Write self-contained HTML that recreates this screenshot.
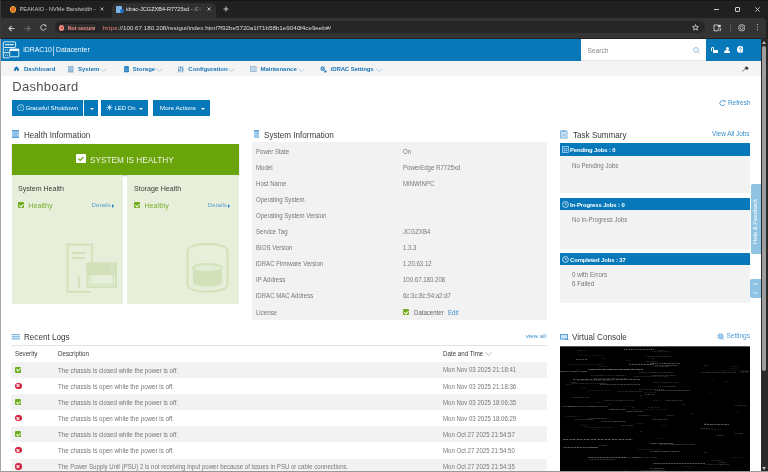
<!DOCTYPE html>
<html><head><meta charset="utf-8">
<style>
*{box-sizing:border-box;margin:0;padding:0}
html,body{width:768px;height:472px;overflow:hidden;background:#fff;font-family:"Liberation Sans",sans-serif}
#root{position:absolute;left:0;top:0;width:768px;height:472px;will-change:transform}
.a{position:absolute;white-space:nowrap;line-height:1}
.r{position:absolute}
#frame{position:absolute;left:0;top:0;width:768px;height:38.5px;background:#202020;border-top:1px solid #161616}
#toolbar{position:absolute;left:0;top:17.6px;width:766px;height:20.9px;background:#343434;border-top-right-radius:4px}
#omni{position:absolute;left:55px;top:20.8px;width:650px;height:12.7px;border-radius:6.5px;background:#262626}
.ct{color:#d8d8d8;font-size:6.2px}
#hdr{position:absolute;left:0;top:38.5px;width:761px;height:22.2px;background:#0779ba}
#nav{position:absolute;left:0;top:60.7px;width:761px;height:15.7px;background:#f4f4f4}
.nv{color:#1a74b6;font-size:6px;font-weight:bold;top:66.1px}
.btn{position:absolute;top:100.2px;height:15.5px;background:#0779ba;color:#fff;font-size:6.2px;line-height:15.2px}
.sec{font-size:9px;color:#3a3a3a;transform-origin:0 0;transform:scaleX(0.9)}
.lbl{font-size:6.6px;color:#777;transform-origin:0 0;transform:scaleX(0.92)}
.val{font-size:6.6px;color:#777;transform-origin:0 0;transform:scaleX(0.92)}
.blue{color:#3b90cd}
.scroll{position:absolute;left:761px;top:38.5px;width:7px;height:434px;background:#2a2a2a}
.logrow{position:absolute;left:11px;width:536px;height:16.1px}
.logrow.g{background:#f2f2f2}
.ok{position:absolute;width:6.3px;height:6.3px;background:#70ad1c;border-radius:1px}
.ok::after{content:"";position:absolute;left:2px;top:0.9px;width:1.5px;height:2.8px;border-right:0.9px solid #fff;border-bottom:0.9px solid #fff;transform:rotate(45deg)}
.err{position:absolute;width:6.5px;height:6.5px;background:#d4213d;border-radius:50%}
.err::before,.err::after{content:"";position:absolute;left:1.3px;top:2.85px;width:3.9px;height:0.8px;background:#fff;transform:rotate(45deg)}
.err::after{transform:rotate(-45deg)}
.jobbar{position:absolute;left:560px;width:189.7px;height:13.3px;background:#0779ba;color:#fff;font-size:5.9px;font-weight:bold;line-height:13.3px;letter-spacing:-0.1px}
</style></head><body><div id="root">
<!-- browser chrome -->
<div id="frame"></div>
<div class="r" style="left:111.5px;top:2.8px;width:104.2px;height:15px;border-radius:5px 5px 0 0;background:#2f2f2f"></div>
<div id="toolbar"></div>
<!-- tab1 -->
<div class="r" style="left:9.5px;top:6px;width:6.5px;height:6.5px;border-radius:50%;background:#e0662a;border:1.2px solid #f2b531"></div>
<div class="a ct" style="left:19.5px;top:7px;font-size:5.6px;color:#c4c4c4">PEAKAIO - NVMe Bandwidth -</div>
<svg class="r" style="left:100.3px;top:7px" width="4" height="4"><path d="M0.5 0.5 L3.5 3.5 M3.5 0.5 L0.5 3.5" stroke="#c8c8c8" stroke-width="0.8"/></svg>
<!-- tab2 -->
<div class="r" style="left:116px;top:5.5px;width:6px;height:7.5px;background:#7ab4e6;border-radius:1px"></div>
<div class="r" style="left:119.5px;top:9px;width:4px;height:4px;background:#1a73c8;border-radius:50%"></div>
<div class="a ct" style="left:126px;top:7px;font-size:5.6px;color:#e6e6e6;width:76px;overflow:hidden;-webkit-mask-image:linear-gradient(90deg,#000 85%,transparent)">idrac-JCGZXB4-R7725xd - iDRAC</div>
<svg class="r" style="left:206.8px;top:6.9px" width="4" height="4"><path d="M0.5 0.5 L3.5 3.5 M3.5 0.5 L0.5 3.5" stroke="#d8d8d8" stroke-width="0.8"/></svg>
<svg class="r" style="left:222.5px;top:6px" width="6" height="6"><path d="M3 0.5 V5.5 M0.5 3 H5.5" stroke="#d8d8d8" stroke-width="0.9"/></svg>
<!-- window controls -->
<div class="r" style="left:714px;top:9px;width:4.5px;height:0.9px;background:#ccc"></div>
<div class="r" style="left:734.5px;top:6.8px;width:5px;height:5px;border:0.9px solid #ccc;border-radius:1px"></div>
<svg class="r" style="left:755px;top:6.8px" width="5" height="5"><path d="M0.3 0.3 L4.7 4.7 M4.7 0.3 L0.3 4.7" stroke="#ccc" stroke-width="0.9"/></svg>
<!-- toolbar -->
<svg class="r" style="left:8px;top:24.5px" width="7" height="7" viewBox="0 0 7 7"><path d="M6.5 3.5 H1 M3.5 1 L1 3.5 L3.5 6" stroke="#c8c8c8" stroke-width="1.1" fill="none"/></svg>
<svg class="r" style="left:24px;top:24.5px" width="7" height="7" viewBox="0 0 7 7"><path d="M0.5 3.5 H6 M3.5 1 L6 3.5 L3.5 6" stroke="#6a6a6a" stroke-width="1.1" fill="none"/></svg>
<svg class="r" style="left:39.5px;top:24.3px" width="7" height="7" viewBox="0 0 7 7"><path d="M5.8 2.3 A2.7 2.7 0 1 0 6 4" stroke="#c8c8c8" stroke-width="1" fill="none"/><path d="M4.2 0.6 L6.3 0.8 L6.2 2.9 Z" fill="#c8c8c8"/></svg>
<div id="omni"></div>
<div class="r" style="left:56.6px;top:22.6px;width:41.4px;height:9.8px;border-radius:5px;background:#2e2e2e;border:0.5px solid #1c1c1c"></div>
<div class="r" style="left:58.8px;top:25px;width:5.5px;height:5.5px;border-radius:50%;background:#f28b82"></div>
<svg class="r" style="left:58.8px;top:25px" width="5.5" height="5.5"><path d="M1.8 1.8 L3.7 3.7 M3.7 1.8 L1.8 3.7" stroke="#5a2a28" stroke-width="0.7"/></svg>
<div class="a" style="left:67.8px;top:25.6px;font-size:5.3px;color:#f28b82;font-weight:bold">Not secure</div>
<div class="a" style="left:102.5px;top:25px;font-size:6.24px;color:#ddd"><span style="color:#f28b82;letter-spacing:0.35px">https</span>://100.67.180.208/restgui/index.html?f92be5720a1f71b58b1e9040f4ce9eeb#/</div>
<svg class="r" style="left:691.8px;top:24.2px" width="7" height="7" viewBox="0 0 7 7"><path d="M3.5 0.6 L4.3 2.6 L6.4 2.7 L4.8 4 L5.3 6.2 L3.5 5 L1.7 6.2 L2.2 4 L0.6 2.7 L2.7 2.6 Z" stroke="#e0e0e0" stroke-width="0.8" fill="none" stroke-linejoin="round"/></svg>
<svg class="r" style="left:713px;top:24px" width="9" height="8" viewBox="0 0 9 8"><path d="M5 1 H1 V6.8 H5" stroke="#d0d0d0" stroke-width="0.9" fill="none"/><rect x="4.8" y="0.8" width="3" height="2.2" fill="#d0d0d0"/><circle cx="6.4" cy="5.2" r="1.3" stroke="#d0d0d0" stroke-width="0.8" fill="none"/><path d="M7.2 6.1 L8 6.9" stroke="#d0d0d0" stroke-width="0.8"/></svg>
<div class="r" style="left:729.5px;top:23.5px;width:0.8px;height:8px;background:#555"></div>
<svg class="r" style="left:737.8px;top:24.2px" width="7.5" height="7.5" viewBox="0 0 7.5 7.5"><circle cx="3.75" cy="3.75" r="3.2" stroke="#d0d0d0" stroke-width="0.8" fill="none"/><circle cx="3.75" cy="3.75" r="1.6" stroke="#d0d0d0" stroke-width="0.7" fill="none"/></svg>
<div class="r" style="left:757.2px;top:24px;width:1.2px;height:1.2px;background:#ccc;box-shadow:0 2.6px 0 #ccc,0 5.2px 0 #ccc"></div>

<!-- iDRAC header -->
<div id="hdr"></div>
<svg class="r" style="left:0;top:38px" width="22" height="22" viewBox="0 0 22 22" fill="none" stroke="#f2f8fc" stroke-width="0.9">
<rect x="3.3" y="3.9" width="12.3" height="5.6" rx="0.8"/>
<path d="M5 6.7 H13.8" stroke-width="1.1"/>
<path d="M3.3 9.5 V19.8 H9.5 M3.3 14.6 H9.5"/>
<path d="M5 12 H5.9 M6.9 12 H7.8 M5 17.2 H5.9 M6.9 17.2 H7.8" stroke-width="1"/>
<rect x="9.7" y="11" width="9.1" height="7.8" rx="0.5" fill="#0779ba"/>
<rect x="9.7" y="11" width="9.1" height="2" fill="#f2f8fc" stroke="none"/>
</svg>
<div class="a" style="left:23.2px;top:47.2px;font-size:6.9px;color:#f4f9fd">iDRAC10</div>
<div class="r" style="left:53.2px;top:46px;width:0.6px;height:10px;background:#a9d0ec"></div>
<div class="a" style="left:56px;top:47.2px;font-size:6.9px;color:#f4f9fd">Datacenter</div>
<div class="r" style="left:580.7px;top:38.5px;width:125.3px;height:22.2px;background:#fff;border-bottom:1px solid #e6e6e6"></div>
<div class="a" style="left:587.5px;top:47.6px;font-size:6.6px;color:#8a8a8a">Search</div>
<svg class="r" style="left:692.8px;top:47px" width="7" height="6.5" viewBox="0 0 7 6.5"><circle cx="3" cy="2.9" r="2.3" stroke="#86b4d8" stroke-width="0.9" fill="none"/><path d="M4.7 4.6 L6.5 6.2" stroke="#86b4d8" stroke-width="0.9"/></svg>
<!-- lock / user / help -->
<div class="r" style="left:713px;top:49.5px;width:4.8px;height:3.5px;background:#fff;border-radius:0.5px"></div>
<div class="r" style="left:710.8px;top:46.5px;width:3.6px;height:4px;border:1px solid #fff;border-bottom:none;border-radius:2px 2px 0 0"></div>
<div class="r" style="left:725.5px;top:46.5px;width:3px;height:3px;background:#fff;border-radius:50%"></div>
<div class="r" style="left:724px;top:50px;width:6px;height:3px;background:#fff;border-radius:3px 3px 0 0"></div>
<svg class="r" style="left:736.6px;top:46.4px" width="6.8" height="6.8" viewBox="0 0 6.8 6.8"><circle cx="3.4" cy="3.4" r="3.4" fill="#fff"/><path d="M2.3 2.6 C2.3 1.4 4.5 1.4 4.5 2.6 C4.5 3.4 3.4 3.4 3.4 4.3" stroke="#0779ba" stroke-width="0.8" fill="none"/><circle cx="3.4" cy="5.3" r="0.45" fill="#0779ba"/></svg>

<!-- nav -->
<div id="nav"></div>
<svg class="r" style="left:14.3px;top:66.4px" width="5" height="5.5" viewBox="0 0 6 6.5"><path d="M3 0.3 L5.8 2.8 V5.8 H3.8 V4 H2.2 V5.8 H0.2 V2.8 Z" fill="#1571b3"/></svg>
<div class="a nv" style="left:24px">Dashboard</div>
<svg class="r" style="left:68.3px;top:66.3px" width="5.5" height="6.5" viewBox="0 0 5.5 6.5"><rect x="0" y="0" width="5.5" height="6.5" fill="#8fb3d3"/><path d="M0.8 1.3 H4.7 M0.8 2.6 H4.7 M0.8 3.9 H4.7" stroke="#c9dcec" stroke-width="0.5"/></svg>
<div class="a nv" style="left:78px">System</div>
<svg class="r" style="left:99.8px;top:67.6px" width="7" height="4.5"><path d="M0.4 0.6 L3.5 3.6 L6.6 0.6" stroke="#a3c3dd" stroke-width="0.8" fill="none"/></svg>
<svg class="r" style="left:123.6px;top:66.2px" width="5" height="6.5" viewBox="0 0 5 6.5"><path d="M0 1 C0 -0.2 5 -0.2 5 1 V5.5 C5 6.7 0 6.7 0 5.5 Z" fill="#2a84c8"/><path d="M0 2.4 C1.5 3.1 3.5 3.1 5 2.4 M0 4 C1.5 4.7 3.5 4.7 5 4" stroke="#a9cdea" stroke-width="0.4" fill="none"/></svg>
<div class="a nv" style="left:132.8px">Storage</div>
<svg class="r" style="left:156.4px;top:67.6px" width="7" height="4.5"><path d="M0.4 0.6 L3.5 3.6 L6.6 0.6" stroke="#a3c3dd" stroke-width="0.8" fill="none"/></svg>
<svg class="r" style="left:178.2px;top:66.3px" width="5.5" height="6.5" viewBox="0 0 5.5 6.5"><path d="M0.8 0.3 V6.3 M2.75 0.3 V6.3 M4.7 0.3 V6.3" stroke="#3d8bc9" stroke-width="0.75"/><path d="M0 4.3 H1.6 M1.95 1.6 H3.55 M3.9 3.3 H5.5" stroke="#3d8bc9" stroke-width="0.9"/></svg>
<div class="a nv" style="left:188.3px">Configuration</div>
<svg class="r" style="left:228.4px;top:67.6px" width="7" height="4.5"><path d="M0.4 0.6 L3.5 3.6 L6.6 0.6" stroke="#a3c3dd" stroke-width="0.8" fill="none"/></svg>
<svg class="r" style="left:250px;top:66.4px" width="6.5" height="6" viewBox="0 0 6.5 6"><rect x="0.4" y="0.4" width="5.7" height="5.2" fill="#cfdeea" stroke="#8fb3d3" stroke-width="0.8"/><path d="M1.5 2.2 H5 M1.5 3.8 H5" stroke="#a3c1da" stroke-width="0.6"/></svg>
<div class="a nv" style="left:260.4px">Maintenance</div>
<svg class="r" style="left:298.2px;top:67.6px" width="7" height="4.5"><path d="M0.4 0.6 L3.5 3.6 L6.6 0.6" stroke="#a3c3dd" stroke-width="0.8" fill="none"/></svg>
<svg class="r" style="left:320.2px;top:66.2px" width="7" height="7" viewBox="0 0 7 7"><circle cx="2.6" cy="2.6" r="1.7" stroke="#2a7fc2" stroke-width="1.3" stroke-dasharray="0.9 0.45" fill="none"/><circle cx="2.6" cy="2.6" r="1.3" fill="#2a7fc2"/><circle cx="2.6" cy="2.6" r="0.5" fill="#f4f4f4"/><circle cx="5.4" cy="5.4" r="1.2" fill="#2a7fc2"/></svg>
<div class="a nv" style="left:330.6px;letter-spacing:-0.1px">iDRAC Settings</div>
<svg class="r" style="left:375.5px;top:67.6px" width="7" height="4.5"><path d="M0.4 0.6 L3.5 3.6 L6.6 0.6" stroke="#a3c3dd" stroke-width="0.8" fill="none"/></svg>
<svg class="r" style="left:742px;top:65.8px" width="7" height="6" viewBox="0 0 7 6"><path d="M0.5 5.5 L3 3" stroke="#333" stroke-width="0.7"/><path d="M2.5 2 L4.5 0.3 L6.7 2.3 L5 4 Z" fill="#333"/></svg>

<!-- title -->
<div class="a" style="left:12.3px;top:80px;font-size:13px;letter-spacing:0.3px;color:#505050">Dashboard</div>
<svg class="r" style="left:719px;top:99.5px" width="7" height="6.5" viewBox="0 0 7 6.5"><path d="M5.6 1.6 A2.6 2.6 0 1 0 5.8 4.4" stroke="#4d97cd" stroke-width="0.9" fill="none"/><path d="M4.4 0.3 L6.6 0.6 L6.2 2.6 Z" fill="#4d97cd"/></svg><div class="a blue" style="left:728px;top:99.5px;font-size:6.4px">Refresh</div>

<!-- buttons -->
<div class="btn" style="left:12px;width:71px;padding-left:13.5px">Graceful Shutdown</div>
<svg class="r" style="left:16.6px;top:103.8px" width="7.6" height="7.6" viewBox="0 0 7.6 7.6"><circle cx="3.8" cy="3.8" r="3.2" stroke="#d4e8f7" stroke-width="0.75" fill="none"/><path d="M3.8 2.2 V4.4" stroke="#d4e8f7" stroke-width="0.7"/></svg>
<div class="btn" style="left:84px;width:14px"></div>
<div class="r" style="left:89.5px;top:107.5px;border-left:2px solid transparent;border-right:2px solid transparent;border-top:2.2px solid #fff"></div>
<div class="btn" style="left:101px;width:46.8px;padding-left:13.5px;font-size:5.9px;line-height:16px">LED On</div>
<svg class="r" style="left:105.5px;top:104px" width="7" height="7" viewBox="0 0 7 7"><path d="M3.5 0.3 V6.7 M0.3 3.5 H6.7 M1.2 1.2 L5.8 5.8 M5.8 1.2 L1.2 5.8" stroke="#a9d4f2" stroke-width="0.7"/><circle cx="3.5" cy="3.5" r="1.3" fill="#d8eefb"/></svg>
<div class="r" style="left:138.8px;top:107.5px;border-left:2px solid transparent;border-right:2px solid transparent;border-top:2.2px solid #fff"></div>
<div class="btn" style="left:152.5px;width:57.5px;padding-left:7.5px">More Actions</div>
<div class="r" style="left:200.5px;top:107.5px;border-left:2px solid transparent;border-right:2px solid transparent;border-top:2.2px solid #fff"></div>

<!-- Health information -->
<svg class="r" style="left:12px;top:130px" width="7" height="8" viewBox="0 0 7 8"><rect x="0" y="0" width="7" height="8" fill="#9fcbee"/><rect x="0" y="0" width="7" height="1.3" fill="#5a9fd8"/><rect x="0" y="6.6" width="7" height="1.4" fill="#5a9fd8"/><path d="M1.5 2.8 H5.5 M1.5 4.6 H5.5" stroke="#6fb0e3" stroke-width="0.7"/></svg>
<div class="a sec" style="left:24px;top:130.5px">Health Information</div>
<div class="r" style="left:12px;top:143.7px;width:226.7px;height:31px;background:#6aa40b;box-shadow:0 1px 1.5px rgba(0,0,0,0.25)"></div>
<div class="r" style="left:76.3px;top:154.3px;width:9.4px;height:8.8px;background:#fff;border-radius:1px"></div>
<svg class="r" style="left:76.3px;top:154.3px" width="10" height="9"><path d="M2.3 4.6 L4.2 6.4 L7.6 2.8" stroke="#6aa40b" stroke-width="1.2" fill="none"/></svg>
<div class="a" style="left:89.7px;top:155px;font-size:9.6px;color:#eef5e0;transform-origin:0 0;transform:scaleX(0.86)">SYSTEM IS HEALTHY</div>
<div class="r" style="left:12px;top:174.7px;width:110.8px;height:129.5px;background:#e7efdb"></div>
<div class="r" style="left:127.3px;top:174.7px;width:111.4px;height:129.5px;background:#e7efdb"></div>
<div class="a" style="left:18.2px;top:185px;font-size:7.6px;color:#3c3c3c;transform-origin:0 0;transform:scaleX(0.93)">System Health</div>
<div class="ok" style="left:18.2px;top:202.3px;width:6.2px;height:6.2px"></div>
<div class="a" style="left:28.3px;top:202px;font-size:7.2px;color:#78ad2e">Healthy</div>
<div class="a" style="left:91.6px;top:202.2px;font-size:6.1px;color:#5a9dd2;letter-spacing:0.1px">Details</div>
<div class="r" style="left:111.5px;top:203.5px;border-top:2px solid transparent;border-bottom:2px solid transparent;border-left:2.6px solid #1f7fc4"></div>
<div class="a" style="left:134.3px;top:185px;font-size:7.6px;color:#3c3c3c;transform-origin:0 0;transform:scaleX(0.93)">Storage Health</div>
<div class="ok" style="left:134.3px;top:202.3px;width:6.2px;height:6.2px"></div>
<div class="a" style="left:144.4px;top:202px;font-size:7.2px;color:#78ad2e">Healthy</div>
<div class="a" style="left:207.8px;top:202.2px;font-size:6.1px;color:#5a9dd2;letter-spacing:0.1px">Details</div>
<div class="r" style="left:227.6px;top:203.5px;border-top:2px solid transparent;border-bottom:2px solid transparent;border-left:2.6px solid #1f7fc4"></div>
<!-- server illustration -->
<svg class="r" style="left:66px;top:243px" width="52" height="51" viewBox="0 0 52 51" fill="none" stroke="#d2e1ba" stroke-width="2">
<path d="M25.8 20 V1.5 H1.5 V48.8 H25"/>
<path d="M6 10 H19 M6 15 H19" stroke-width="1.8"/>
<path d="M13 33 V45" stroke-width="1.8"/>
<rect x="21.5" y="20.5" width="28.5" height="23.5" fill="#e7efdb"/>
<rect x="21.5" y="20.5" width="28.5" height="10" fill="#d2e1ba"/>
<path d="M45 25 L47.5 27.5 H45 Z" fill="#e7efdb" stroke="none"/>
<rect x="24" y="31.5" width="23.5" height="10" stroke-width="1.3"/>
</svg>
<!-- storage illustration -->
<svg class="r" style="left:186px;top:243px" width="43" height="51" viewBox="0 0 43 51" fill="none" stroke="#d2e1ba" stroke-width="2">
<path d="M1.5 8 C1.5 -1.5 41.5 -1.5 41.5 8 V42 C41.5 51 1.5 51 1.5 42 Z"/>
<path d="M7 25 V39 C7 45 36 45 36 39 V25" fill="#d2e1ba" stroke="none"/>
<ellipse cx="21.5" cy="25" rx="14.5" ry="4" fill="#e3edd3" stroke-width="1.8"/>
</svg>

<!-- System information -->
<svg class="r" style="left:253.6px;top:129.8px" width="5.6" height="8.7" viewBox="0 0 5.6 8.7"><rect x="0" y="0" width="5.6" height="8.7" rx="0.6" fill="#a6d0ef"/><rect x="0" y="0" width="5.6" height="1.5" fill="#5fa3da"/><path d="M1.9 2.5 V7.5 M3.7 2.5 V7.5" stroke="#7fb9e6" stroke-width="0.6"/><rect x="0" y="7.6" width="5.6" height="1.1" fill="#7fb9e6"/></svg>
<div class="a sec" style="left:264.3px;top:130.6px">System Information</div>
<div class="r" style="left:251.5px;top:142.4px;width:295.2px;height:177.6px;background:#f2f2f2"></div>
<div class="a lbl" style="left:256px;top:148.80px">Power State</div><div class="a val" style="left:403px;top:148.80px">On</div>
<div class="a lbl" style="left:256px;top:164.87px">Model</div><div class="a val" style="left:403px;top:164.87px">PowerEdge R7725xd</div>
<div class="a lbl" style="left:256px;top:180.94px">Host Name</div><div class="a val" style="left:403px;top:180.94px">MINWINPC</div>
<div class="a lbl" style="left:256px;top:197.01px">Operating System</div>
<div class="a lbl" style="left:256px;top:213.08px">Operating System Version</div>
<div class="a lbl" style="left:256px;top:229.15px">Service Tag</div><div class="a val" style="left:403px;top:229.15px">JCGZXB4</div>
<div class="a lbl" style="left:256px;top:245.22px">BIOS Version</div><div class="a val" style="left:403px;top:245.22px">1.3.3</div>
<div class="a lbl" style="left:256px;top:261.29px">iDRAC Firmware Version</div><div class="a val" style="left:403px;top:261.29px">1.20.63.12</div>
<div class="a lbl" style="left:256px;top:277.36px">IP Address</div><div class="a val" style="left:403px;top:277.36px">100.67.180.208</div>
<div class="a lbl" style="left:256px;top:293.43px">iDRAC MAC Address</div><div class="a val" style="left:403px;top:293.43px">6c:3c:8c:94:a2:d7</div>
<div class="a lbl" style="left:256px;top:309.50px">License</div>
<div class="ok" style="left:403px;top:309.3px;width:6.3px;height:5.8px"></div>
<div class="a val" style="left:414px;top:309.50px;color:#666">Datacenter</div>
<div class="a val blue" style="left:448.4px;top:309.50px">Edit</div>

<!-- Task summary -->
<svg class="r" style="left:560.3px;top:130.3px" width="7.5" height="8.5" viewBox="0 0 7.5 8.5"><rect x="0.5" y="1" width="6.5" height="7" fill="#d5e7f5" stroke="#78b0dc" stroke-width="0.9"/><rect x="2.2" y="0.2" width="3.1" height="1.8" fill="#78b0dc"/><path d="M1.8 4 H5.7 M1.8 5.8 H5.7" stroke="#78b0dc" stroke-width="0.7"/></svg>
<div class="a sec" style="left:573px;top:130.5px">Task Summary</div>
<div class="a blue" style="left:712px;top:130.6px;font-size:6.5px;letter-spacing:-0.05px">View All Jobs</div>
<div class="r" style="left:560px;top:156px;width:189.5px;height:37.2px;background:#f2f2f2"></div>
<div class="r" style="left:560px;top:210px;width:189.5px;height:38.7px;background:#f2f2f2"></div>
<div class="r" style="left:560px;top:265px;width:189.5px;height:38.2px;background:#f2f2f2"></div>
<div class="jobbar" style="top:143.2px;padding-left:10px;line-height:14.3px">Pending Jobs : 0</div>
<svg class="r" style="left:562px;top:146px" width="7" height="7" viewBox="0 0 7 7"><rect x="0.5" y="0.5" width="6" height="6" fill="none" stroke="#a8cfee" stroke-width="0.8"/><path d="M0.5 2.3 H6.5 M0.5 4.3 H6.5 M2.5 2.3 V6.5 M4.5 2.3 V6.5" stroke="#a8cfee" stroke-width="0.6"/></svg>
<div class="a lbl" style="left:571.5px;top:163.2px;font-size:6.6px">No Pending Jobs</div>
<div class="jobbar" style="top:197.8px;height:12.7px;padding-left:10px;line-height:14px">In-Progress Jobs : 0</div>
<svg class="r" style="left:562px;top:200.8px" width="7" height="7" viewBox="0 0 7 7"><circle cx="3.5" cy="3.5" r="2.9" fill="none" stroke="#e8f2fa" stroke-width="0.8"/><path d="M3.5 1.8 V3.6 H5" stroke="#e8f2fa" stroke-width="0.7" fill="none"/></svg>
<div class="a lbl" style="left:571.5px;top:217.4px;font-size:6.6px">No In-Progress Jobs</div>
<div class="jobbar" style="top:252.8px;height:12.7px;padding-left:10px;line-height:14px">Completed Jobs : 37</div>
<svg class="r" style="left:562px;top:255.8px" width="7" height="7" viewBox="0 0 7 7"><circle cx="3.5" cy="3.5" r="2.9" fill="none" stroke="#e8f2fa" stroke-width="0.8"/><path d="M3.5 1.8 V3.6 H5" stroke="#e8f2fa" stroke-width="0.7" fill="none"/></svg>
<div class="a lbl" style="left:571.5px;top:271.5px;font-size:6.8px">0 with Errors</div>
<div class="a lbl" style="left:571.5px;top:280.8px;font-size:6.8px">6 Failed</div>
<!-- help & feedback tab -->
<div class="r" style="left:750.5px;top:184.3px;width:10.5px;height:70px;background:#8fc3e3;border-radius:2px 0 0 2px"></div>
<div class="a" style="left:752.8px;top:244px;font-size:5.9px;color:#fff;transform-origin:0 0;transform:rotate(-90deg)">Help &amp; Feedback</div>
<div class="r" style="left:750px;top:279px;width:11px;height:19px;background:#8fc3e3;border-radius:2px 0 0 2px"></div>
<svg class="r" style="left:750px;top:279px" width="11" height="19"><path d="M3.5 6 L5.5 4 L7.5 6 M3.5 13 L5.5 15 L7.5 13" stroke="#fff" stroke-width="0.8" fill="none"/></svg>

<!-- Recent logs -->
<svg class="r" style="left:11px;top:333.6px" width="9" height="6"><path d="M0.5 0.7 H9 M0.8 2.8 H9 M0.8 4.9 H9" stroke="#4a9ad6" stroke-width="0.9"/></svg>
<div class="a sec" style="left:23.8px;top:333.4px">Recent Logs</div>
<div class="a blue" style="left:525.7px;top:333px;font-size:6.2px">view all</div>
<div class="r" style="left:11px;top:345.2px;width:536px;height:0.8px;background:#e2e2e2"></div>
<div class="a" style="left:15.4px;top:350.7px;font-size:6.8px;color:#3a3a3a;transform-origin:0 0;transform:scaleX(0.91)">Severity</div>
<div class="a" style="left:58.2px;top:350.7px;font-size:6.8px;color:#3a3a3a;transform-origin:0 0;transform:scaleX(0.91)">Description</div>
<div class="a" style="left:443.3px;top:350.7px;font-size:6.8px;color:#3a3a3a;transform-origin:0 0;transform:scaleX(0.91)">Date and Time</div>
<svg class="r" style="left:484.5px;top:351.5px" width="7" height="4"><path d="M0.5 0.5 L3.5 3.3 L6.5 0.5" stroke="#999" stroke-width="0.7" fill="none"/></svg>

<div class="logrow g" style="top:362px"></div>
<div class="logrow" style="top:378.1px"></div>
<div class="logrow g" style="top:394.2px"></div>
<div class="logrow" style="top:410.3px"></div>
<div class="logrow g" style="top:426.4px"></div>
<div class="logrow" style="top:442.5px"></div>
<div class="logrow g" style="top:458.6px"></div>

<div class="ok" style="left:15px;top:366.5px"></div>
<div class="err" style="left:15px;top:382.5px"></div>
<div class="ok" style="left:15px;top:398.7px"></div>
<div class="err" style="left:15px;top:414.7px"></div>
<div class="ok" style="left:15px;top:430.9px"></div>
<div class="err" style="left:15px;top:446.9px"></div>
<div class="err" style="left:15px;top:463px"></div>

<div class="a lbl" style="transform:scaleX(0.94);left:58.4px;top:367.6px">The chassis is closed while the power is off.</div>
<div class="a lbl" style="transform:scaleX(0.94);left:58.4px;top:383.7px">The chassis is open while the power is off.</div>
<div class="a lbl" style="transform:scaleX(0.94);left:58.4px;top:399.8px">The chassis is closed while the power is off.</div>
<div class="a lbl" style="transform:scaleX(0.94);left:58.4px;top:415.9px">The chassis is open while the power is off.</div>
<div class="a lbl" style="transform:scaleX(0.94);left:58.4px;top:432.0px">The chassis is closed while the power is off.</div>
<div class="a lbl" style="transform:scaleX(0.94);left:58.4px;top:448.1px">The chassis is open while the power is off.</div>
<div class="a lbl" style="transform:scaleX(0.92);left:58.4px;top:464.2px">The Power Supply Unit (PSU) 2 is not receiving input power because of issues in PSU or cable connections.</div>

<div class="a lbl" style="left:443.3px;top:367.4px">Mon Nov 03 2025 21:18:41</div>
<div class="a lbl" style="left:443.3px;top:383.5px">Mon Nov 03 2025 21:18:36</div>
<div class="a lbl" style="left:443.3px;top:399.6px">Mon Nov 03 2025 18:06:35</div>
<div class="a lbl" style="left:443.3px;top:415.7px">Mon Nov 03 2025 18:06:29</div>
<div class="a lbl" style="left:443.3px;top:431.8px">Mon Oct 27 2025 21:54:57</div>
<div class="a lbl" style="left:443.3px;top:447.9px">Mon Oct 27 2025 21:54:50</div>
<div class="a lbl" style="left:443.3px;top:464.0px">Mon Oct 27 2025 21:54:35</div>

<!-- Virtual console -->
<svg class="r" style="left:560px;top:333.5px" width="9" height="6.5"><rect x="0.5" y="0.5" width="7" height="4.5" stroke="#5a9fd6" stroke-width="1" fill="#cfe4f4"/><path d="M5 5.5 L8.5 5.5" stroke="#5a9fd6" stroke-width="1"/></svg>
<div class="a sec" style="left:572.4px;top:333.4px">Virtual Console</div>
<svg class="r" style="left:717.3px;top:333px" width="7.5" height="7" viewBox="0 0 7.5 7"><circle cx="3.5" cy="3.3" r="2.4" stroke="#72b0e0" stroke-width="1.5" fill="#a9d0ef" stroke-dasharray="1.1 0.6"/><path d="M4 4 L6.8 6.6" stroke="#72b0e0" stroke-width="1"/></svg>
<div class="a blue" style="left:726.5px;top:333.2px;font-size:6.5px;color:#4d9dd6">Settings</div>
<div class="r" style="left:560.2px;top:345.5px;width:189.5px;height:130px;background:#000;overflow:hidden;border-top:0.6px solid #555">
<i style="position:absolute;left:63.7px;top:2.5px;width:30.1px;height:0.9px;background:repeating-linear-gradient(90deg,rgba(210,210,210,0.43) 0 0.9px,rgba(210,210,210,0.14) 0.9px 1.8px)"></i>
<i style="position:absolute;left:16.8px;top:7.1px;width:18.0px;height:0.9px;background:repeating-linear-gradient(90deg,rgba(210,210,210,0.32) 0 1.6px,rgba(210,210,210,0.11) 1.6px 2.4px)"></i>
<i style="position:absolute;left:15.5px;top:12.9px;width:12.3px;height:0.9px;background:repeating-linear-gradient(90deg,rgba(210,210,210,0.32) 0 0.8px,rgba(210,210,210,0.11) 0.8px 1.5px)"></i>
<i style="position:absolute;left:6.8px;top:16.1px;width:7.0px;height:0.9px;background:repeating-linear-gradient(90deg,rgba(210,210,210,0.16) 0 1.5px,rgba(210,210,210,0.05) 1.5px 2.1px)"></i>
<i style="position:absolute;left:68.8px;top:17.7px;width:25.0px;height:0.9px;background:repeating-linear-gradient(90deg,rgba(210,210,210,0.38) 0 0.8px,rgba(210,210,210,0.13) 0.8px 1.5px)"></i>
<i style="position:absolute;left:77.4px;top:16.1px;width:16.4px;height:0.9px;background:repeating-linear-gradient(90deg,rgba(210,210,210,0.27) 0 1.1px,rgba(210,210,210,0.09) 1.1px 1.7px)"></i>
<i style="position:absolute;left:0.3px;top:24.6px;width:26.2px;height:0.9px;background:repeating-linear-gradient(90deg,rgba(210,210,210,0.32) 0 1.6px,rgba(210,210,210,0.11) 1.6px 2.2px)"></i>
<i style="position:absolute;left:27.8px;top:22.5px;width:55.0px;height:0.9px;background:repeating-linear-gradient(90deg,rgba(210,210,210,0.43) 0 1.4px,rgba(210,210,210,0.14) 1.4px 1.7px)"></i>
<i style="position:absolute;left:53.8px;top:28.1px;width:40.0px;height:0.9px;background:repeating-linear-gradient(90deg,rgba(210,210,210,0.38) 0 0.9px,rgba(210,210,210,0.13) 0.9px 1.4px)"></i>
<i style="position:absolute;left:12.8px;top:32.6px;width:67.0px;height:0.9px;background:repeating-linear-gradient(90deg,rgba(210,210,210,0.38) 0 0.8px,rgba(210,210,210,0.13) 0.8px 1.3px)"></i>
<i style="position:absolute;left:29.8px;top:35.1px;width:40.0px;height:0.9px;background:repeating-linear-gradient(90deg,rgba(210,210,210,0.32) 0 1.1px,rgba(210,210,210,0.11) 1.1px 2.0px)"></i>
<i style="position:absolute;left:39.8px;top:37.4px;width:40.0px;height:0.9px;background:repeating-linear-gradient(90deg,rgba(210,210,210,0.27) 0 1.1px,rgba(210,210,210,0.09) 1.1px 1.4px)"></i>
<i style="position:absolute;left:79.8px;top:45.1px;width:14.0px;height:0.9px;background:repeating-linear-gradient(90deg,rgba(210,210,210,0.32) 0 1.5px,rgba(210,210,210,0.11) 1.5px 1.9px)"></i>
<i style="position:absolute;left:84.8px;top:47.6px;width:9.0px;height:0.9px;background:repeating-linear-gradient(90deg,rgba(210,210,210,0.27) 0 0.9px,rgba(210,210,210,0.09) 0.9px 1.4px)"></i>
<i style="position:absolute;left:1.8px;top:54.1px;width:18.0px;height:0.9px;background:repeating-linear-gradient(90deg,rgba(210,210,210,0.27) 0 0.9px,rgba(210,210,210,0.09) 0.9px 1.3px)"></i>
<i style="position:absolute;left:24.8px;top:59.1px;width:22.0px;height:0.9px;background:repeating-linear-gradient(90deg,rgba(210,210,210,0.32) 0 1.3px,rgba(210,210,210,0.11) 1.3px 1.8px)"></i>
<i style="position:absolute;left:27.8px;top:50.1px;width:5.6px;height:0.9px;background:repeating-linear-gradient(90deg,rgba(210,210,210,0.27) 0 1.4px,rgba(210,210,210,0.09) 1.4px 1.8px)"></i>
<i style="position:absolute;left:154.5px;top:5.1px;width:12.3px;height:0.9px;background:repeating-linear-gradient(90deg,rgba(210,210,210,0.32) 0 1.5px,rgba(210,210,210,0.11) 1.5px 1.8px)"></i>
<i style="position:absolute;left:108.8px;top:9.1px;width:12.7px;height:0.9px;background:repeating-linear-gradient(90deg,rgba(210,210,210,0.32) 0 1.3px,rgba(210,210,210,0.11) 1.3px 1.8px)"></i>
<i style="position:absolute;left:151.8px;top:11.1px;width:11.0px;height:0.9px;background:repeating-linear-gradient(90deg,rgba(210,210,210,0.32) 0 1.0px,rgba(210,210,210,0.11) 1.0px 1.7px)"></i>
<i style="position:absolute;left:89.8px;top:16.6px;width:30.0px;height:0.9px;background:repeating-linear-gradient(90deg,rgba(210,210,210,0.38) 0 0.9px,rgba(210,210,210,0.13) 0.9px 1.7px)"></i>
<i style="position:absolute;left:94.8px;top:18.8px;width:23.0px;height:0.9px;background:repeating-linear-gradient(90deg,rgba(210,210,210,0.27) 0 1.5px,rgba(210,210,210,0.09) 1.5px 1.9px)"></i>
<i style="position:absolute;left:130.8px;top:20.1px;width:21.0px;height:0.9px;background:repeating-linear-gradient(90deg,rgba(210,210,210,0.32) 0 1.5px,rgba(210,210,210,0.11) 1.5px 2.3px)"></i>
<i style="position:absolute;left:89.8px;top:28.1px;width:18.0px;height:0.9px;background:repeating-linear-gradient(90deg,rgba(210,210,210,0.32) 0 1.3px,rgba(210,210,210,0.11) 1.3px 2.0px)"></i>
<i style="position:absolute;left:140.8px;top:30.1px;width:34.0px;height:0.9px;background:repeating-linear-gradient(90deg,rgba(210,210,210,0.38) 0 1.4px,rgba(210,210,210,0.13) 1.4px 2.0px)"></i>
<i style="position:absolute;left:135.3px;top:39.1px;width:19.2px;height:0.9px;background:repeating-linear-gradient(90deg,rgba(210,210,210,0.32) 0 1.0px,rgba(210,210,210,0.11) 1.0px 1.7px)"></i>
<i style="position:absolute;left:89.8px;top:41.1px;width:49.6px;height:0.9px;background:repeating-linear-gradient(90deg,rgba(210,210,210,0.38) 0 0.9px,rgba(210,210,210,0.13) 0.9px 1.7px)"></i>
<i style="position:absolute;left:94.8px;top:43.6px;width:35.0px;height:0.9px;background:repeating-linear-gradient(90deg,rgba(210,210,210,0.32) 0 1.4px,rgba(210,210,210,0.11) 1.4px 2.0px)"></i>
<i style="position:absolute;left:89.8px;top:46.1px;width:20.0px;height:0.9px;background:repeating-linear-gradient(90deg,rgba(210,210,210,0.27) 0 1.1px,rgba(210,210,210,0.09) 1.1px 1.9px)"></i>
<i style="position:absolute;left:103.8px;top:57.1px;width:22.0px;height:0.9px;background:repeating-linear-gradient(90deg,rgba(210,210,210,0.32) 0 1.2px,rgba(210,210,210,0.11) 1.2px 2.1px)"></i>
<i style="position:absolute;left:172.4px;top:4.1px;width:16.4px;height:0.9px;background:repeating-linear-gradient(90deg,rgba(210,210,210,0.22) 0 1.4px,rgba(210,210,210,0.07) 1.4px 2.0px)"></i>
<i style="position:absolute;left:180.8px;top:24.6px;width:8.0px;height:0.9px;background:repeating-linear-gradient(90deg,rgba(210,210,210,0.22) 0 1.5px,rgba(210,210,210,0.07) 1.5px 1.8px)"></i>
<i style="position:absolute;left:1.8px;top:59.8px;width:45.6px;height:0.9px;background:repeating-linear-gradient(90deg,rgba(210,210,210,0.32) 0 1.3px,rgba(210,210,210,0.11) 1.3px 2.1px)"></i>
<i style="position:absolute;left:48.8px;top:62.6px;width:15.6px;height:0.9px;background:repeating-linear-gradient(90deg,rgba(210,210,210,0.32) 0 1.4px,rgba(210,210,210,0.11) 1.4px 2.2px)"></i>
<i style="position:absolute;left:65.8px;top:64.8px;width:17.0px;height:0.9px;background:repeating-linear-gradient(90deg,rgba(210,210,210,0.27) 0 1.3px,rgba(210,210,210,0.09) 1.3px 1.7px)"></i>
<i style="position:absolute;left:41.8px;top:74.7px;width:24.0px;height:0.9px;background:repeating-linear-gradient(90deg,rgba(210,210,210,0.32) 0 0.8px,rgba(210,210,210,0.11) 0.8px 1.5px)"></i>
<i style="position:absolute;left:82.8px;top:80.1px;width:11.0px;height:0.9px;background:repeating-linear-gradient(90deg,rgba(210,210,210,0.27) 0 1.6px,rgba(210,210,210,0.09) 1.6px 2.1px)"></i>
<i style="position:absolute;left:62.8px;top:86.1px;width:23.0px;height:0.9px;background:repeating-linear-gradient(90deg,rgba(210,210,210,0.32) 0 1.2px,rgba(210,210,210,0.11) 1.2px 1.5px)"></i>
<i style="position:absolute;left:3.3px;top:92.5px;width:69.5px;height:0.9px;background:repeating-linear-gradient(90deg,rgba(210,210,210,0.43) 0 0.8px,rgba(210,210,210,0.14) 0.8px 1.4px)"></i>
<i style="position:absolute;left:3.3px;top:100.6px;width:34.1px;height:0.9px;background:repeating-linear-gradient(90deg,rgba(210,210,210,0.38) 0 1.0px,rgba(210,210,210,0.13) 1.0px 1.5px)"></i>
<i style="position:absolute;left:65.8px;top:97.1px;width:28.0px;height:0.9px;background:repeating-linear-gradient(90deg,rgba(210,210,210,0.32) 0 1.2px,rgba(210,210,210,0.11) 1.2px 1.5px)"></i>
<i style="position:absolute;left:65.8px;top:104.1px;width:28.0px;height:0.9px;background:repeating-linear-gradient(90deg,rgba(210,210,210,0.32) 0 1.5px,rgba(210,210,210,0.11) 1.5px 2.4px)"></i>
<i style="position:absolute;left:27.5px;top:110.6px;width:38.3px;height:0.9px;background:repeating-linear-gradient(90deg,rgba(210,210,210,0.38) 0 0.9px,rgba(210,210,210,0.13) 0.9px 1.5px)"></i>
<i style="position:absolute;left:29.8px;top:112.8px;width:25.0px;height:0.9px;background:repeating-linear-gradient(90deg,rgba(210,210,210,0.27) 0 1.4px,rgba(210,210,210,0.09) 1.4px 2.0px)"></i>
<i style="position:absolute;left:51.6px;top:120.1px;width:42.6px;height:0.9px;background:repeating-linear-gradient(90deg,rgba(210,210,210,0.32) 0 1.4px,rgba(210,210,210,0.11) 1.4px 2.3px)"></i>
<i style="position:absolute;left:14.8px;top:124.1px;width:65.0px;height:0.9px;background:repeating-linear-gradient(90deg,rgba(210,210,210,0.27) 0 1.0px,rgba(210,210,210,0.09) 1.0px 1.7px)"></i>
<i style="position:absolute;left:170.8px;top:61.1px;width:17.0px;height:0.9px;background:repeating-linear-gradient(90deg,rgba(210,210,210,0.27) 0 1.0px,rgba(210,210,210,0.09) 1.0px 1.7px)"></i>
<i style="position:absolute;left:89.8px;top:70.1px;width:20.0px;height:0.9px;background:repeating-linear-gradient(90deg,rgba(210,210,210,0.32) 0 1.2px,rgba(210,210,210,0.11) 1.2px 2.0px)"></i>
<i style="position:absolute;left:91.8px;top:72.6px;width:16.0px;height:0.9px;background:repeating-linear-gradient(90deg,rgba(210,210,210,0.27) 0 0.9px,rgba(210,210,210,0.09) 0.9px 1.7px)"></i>
<i style="position:absolute;left:143.8px;top:77.5px;width:25.0px;height:0.9px;background:repeating-linear-gradient(90deg,rgba(210,210,210,0.38) 0 1.0px,rgba(210,210,210,0.13) 1.0px 1.4px)"></i>
<i style="position:absolute;left:166.4px;top:76.1px;width:21.4px;height:0.9px;background:repeating-linear-gradient(90deg,rgba(210,210,210,0.32) 0 1.3px,rgba(210,210,210,0.11) 1.3px 1.7px)"></i>
<i style="position:absolute;left:89.8px;top:80.1px;width:17.0px;height:0.9px;background:repeating-linear-gradient(90deg,rgba(210,210,210,0.27) 0 1.3px,rgba(210,210,210,0.09) 1.3px 1.8px)"></i>
<i style="position:absolute;left:139.4px;top:81.8px;width:10.0px;height:0.9px;background:repeating-linear-gradient(90deg,rgba(210,210,210,0.27) 0 1.3px,rgba(210,210,210,0.09) 1.3px 2.0px)"></i>
<i style="position:absolute;left:89.8px;top:96.6px;width:24.0px;height:0.9px;background:repeating-linear-gradient(90deg,rgba(210,210,210,0.32) 0 1.3px,rgba(210,210,210,0.11) 1.3px 1.7px)"></i>
<i style="position:absolute;left:89.8px;top:104.3px;width:30.0px;height:0.9px;background:repeating-linear-gradient(90deg,rgba(210,210,210,0.32) 0 1.2px,rgba(210,210,210,0.11) 1.2px 1.8px)"></i>
<i style="position:absolute;left:92.8px;top:106.1px;width:22.0px;height:0.9px;background:repeating-linear-gradient(90deg,rgba(210,210,210,0.27) 0 1.6px,rgba(210,210,210,0.09) 1.6px 1.9px)"></i>
<i style="position:absolute;left:92.6px;top:116.4px;width:52.2px;height:0.9px;background:repeating-linear-gradient(90deg,rgba(210,210,210,0.38) 0 1.0px,rgba(210,210,210,0.13) 1.0px 1.6px)"></i>
<i style="position:absolute;left:89.8px;top:121.5px;width:14.0px;height:0.9px;background:repeating-linear-gradient(90deg,rgba(210,210,210,0.27) 0 1.4px,rgba(210,210,210,0.09) 1.4px 1.8px)"></i>
<i style="position:absolute;left:58.8px;top:50.1px;width:5.0px;height:0.9px;background:repeating-linear-gradient(90deg,rgba(210,210,210,0.09) 0 1.2px,rgba(210,210,210,0.03) 1.2px 1.9px)"></i>
<i style="position:absolute;left:147.8px;top:46.4px;width:3.0px;height:0.9px;background:repeating-linear-gradient(90deg,rgba(210,210,210,0.09) 0 1.6px,rgba(210,210,210,0.03) 1.6px 2.2px)"></i>
<i style="position:absolute;left:91.6px;top:11.8px;width:3.0px;height:0.9px;background:repeating-linear-gradient(90deg,rgba(210,210,210,0.14) 0 1.0px,rgba(210,210,210,0.05) 1.0px 1.4px)"></i>
<i style="position:absolute;left:43.9px;top:53.7px;width:18.0px;height:0.9px;background:repeating-linear-gradient(90deg,rgba(210,210,210,0.19) 0 1.2px,rgba(210,210,210,0.07) 1.2px 1.7px)"></i>
<i style="position:absolute;left:23.0px;top:79.3px;width:5.0px;height:0.9px;background:repeating-linear-gradient(90deg,rgba(210,210,210,0.16) 0 0.9px,rgba(210,210,210,0.05) 0.9px 1.5px)"></i>
<i style="position:absolute;left:11.9px;top:50.3px;width:18.0px;height:0.9px;background:repeating-linear-gradient(90deg,rgba(210,210,210,0.21) 0 1.6px,rgba(210,210,210,0.07) 1.6px 2.5px)"></i>
<i style="position:absolute;left:9.1px;top:17.6px;width:35.0px;height:0.9px;background:repeating-linear-gradient(90deg,rgba(210,210,210,0.14) 0 1.1px,rgba(210,210,210,0.05) 1.1px 2.0px)"></i>
<i style="position:absolute;left:97.6px;top:39.4px;width:18.0px;height:0.9px;background:repeating-linear-gradient(90deg,rgba(210,210,210,0.19) 0 1.5px,rgba(210,210,210,0.07) 1.5px 1.9px)"></i>
<i style="position:absolute;left:33.2px;top:71.9px;width:18.0px;height:0.9px;background:repeating-linear-gradient(90deg,rgba(210,210,210,0.11) 0 0.9px,rgba(210,210,210,0.04) 0.9px 1.6px)"></i>
<i style="position:absolute;left:18.2px;top:8.9px;width:25.0px;height:0.9px;background:repeating-linear-gradient(90deg,rgba(210,210,210,0.09) 0 1.0px,rgba(210,210,210,0.03) 1.0px 1.5px)"></i>
<i style="position:absolute;left:37.7px;top:67.0px;width:25.0px;height:0.9px;background:repeating-linear-gradient(90deg,rgba(210,210,210,0.19) 0 1.3px,rgba(210,210,210,0.06) 1.3px 2.0px)"></i>
<i style="position:absolute;left:84.1px;top:45.9px;width:12.0px;height:0.9px;background:repeating-linear-gradient(90deg,rgba(210,210,210,0.11) 0 1.0px,rgba(210,210,210,0.04) 1.0px 1.4px)"></i>
<i style="position:absolute;left:33.0px;top:31.4px;width:35.0px;height:0.9px;background:repeating-linear-gradient(90deg,rgba(210,210,210,0.16) 0 1.1px,rgba(210,210,210,0.05) 1.1px 1.7px)"></i>
<i style="position:absolute;left:94.8px;top:91.6px;width:8.0px;height:0.9px;background:repeating-linear-gradient(90deg,rgba(210,210,210,0.12) 0 1.5px,rgba(210,210,210,0.04) 1.5px 2.0px)"></i>
<i style="position:absolute;left:176.3px;top:64.6px;width:3.0px;height:0.9px;background:repeating-linear-gradient(90deg,rgba(210,210,210,0.10) 0 0.9px,rgba(210,210,210,0.04) 0.9px 1.8px)"></i>
<i style="position:absolute;left:62.0px;top:53.4px;width:12.0px;height:0.9px;background:repeating-linear-gradient(90deg,rgba(210,210,210,0.21) 0 1.3px,rgba(210,210,210,0.07) 1.3px 1.9px)"></i>
<i style="position:absolute;left:14.7px;top:72.2px;width:18.0px;height:0.9px;background:repeating-linear-gradient(90deg,rgba(210,210,210,0.20) 0 1.4px,rgba(210,210,210,0.07) 1.4px 1.9px)"></i>
<i style="position:absolute;left:57.0px;top:44.5px;width:25.0px;height:0.9px;background:repeating-linear-gradient(90deg,rgba(210,210,210,0.15) 0 1.1px,rgba(210,210,210,0.05) 1.1px 1.5px)"></i>
<i style="position:absolute;left:143.4px;top:105.3px;width:3.0px;height:0.9px;background:repeating-linear-gradient(90deg,rgba(210,210,210,0.21) 0 1.1px,rgba(210,210,210,0.07) 1.1px 1.6px)"></i>
<i style="position:absolute;left:85.7px;top:9.2px;width:25.0px;height:0.9px;background:repeating-linear-gradient(90deg,rgba(210,210,210,0.18) 0 1.1px,rgba(210,210,210,0.06) 1.1px 1.6px)"></i>
<i style="position:absolute;left:56.2px;top:124.2px;width:18.0px;height:0.9px;background:repeating-linear-gradient(90deg,rgba(210,210,210,0.19) 0 1.6px,rgba(210,210,210,0.07) 1.6px 2.0px)"></i>
<i style="position:absolute;left:51.7px;top:111.1px;width:12.0px;height:0.9px;background:repeating-linear-gradient(90deg,rgba(210,210,210,0.13) 0 0.8px,rgba(210,210,210,0.04) 0.8px 1.6px)"></i>
<i style="position:absolute;left:169.2px;top:21.9px;width:8.0px;height:0.9px;background:repeating-linear-gradient(90deg,rgba(210,210,210,0.10) 0 1.0px,rgba(210,210,210,0.03) 1.0px 1.3px)"></i>
<i style="position:absolute;left:11.4px;top:36.7px;width:35.0px;height:0.9px;background:repeating-linear-gradient(90deg,rgba(210,210,210,0.18) 0 1.1px,rgba(210,210,210,0.06) 1.1px 1.9px)"></i>
<i style="position:absolute;left:72.0px;top:62.7px;width:35.0px;height:0.9px;background:repeating-linear-gradient(90deg,rgba(210,210,210,0.10) 0 0.9px,rgba(210,210,210,0.04) 0.9px 1.7px)"></i>
<i style="position:absolute;left:72.7px;top:110.6px;width:8.0px;height:0.9px;background:repeating-linear-gradient(90deg,rgba(210,210,210,0.19) 0 1.4px,rgba(210,210,210,0.07) 1.4px 2.2px)"></i>
<i style="position:absolute;left:155.5px;top:88.7px;width:8.0px;height:0.9px;background:repeating-linear-gradient(90deg,rgba(210,210,210,0.22) 0 1.0px,rgba(210,210,210,0.07) 1.0px 1.4px)"></i>
<i style="position:absolute;left:123.0px;top:119.9px;width:12.0px;height:0.9px;background:repeating-linear-gradient(90deg,rgba(210,210,210,0.10) 0 1.3px,rgba(210,210,210,0.04) 1.3px 2.0px)"></i>
<i style="position:absolute;left:32.3px;top:82.8px;width:5.0px;height:0.9px;background:repeating-linear-gradient(90deg,rgba(210,210,210,0.08) 0 0.9px,rgba(210,210,210,0.03) 0.9px 1.8px)"></i>
<i style="position:absolute;left:149.6px;top:33.7px;width:5.0px;height:0.9px;background:repeating-linear-gradient(90deg,rgba(210,210,210,0.08) 0 1.1px,rgba(210,210,210,0.03) 1.1px 1.6px)"></i>
<i style="position:absolute;left:75.8px;top:76.7px;width:8.0px;height:0.9px;background:repeating-linear-gradient(90deg,rgba(210,210,210,0.13) 0 1.4px,rgba(210,210,210,0.04) 1.4px 2.2px)"></i>
<i style="position:absolute;left:23.3px;top:65.0px;width:35.0px;height:0.9px;background:repeating-linear-gradient(90deg,rgba(210,210,210,0.16) 0 1.1px,rgba(210,210,210,0.05) 1.1px 1.5px)"></i>
<i style="position:absolute;left:121.8px;top:57.7px;width:3.0px;height:0.9px;background:repeating-linear-gradient(90deg,rgba(210,210,210,0.20) 0 1.4px,rgba(210,210,210,0.07) 1.4px 1.9px)"></i>
<i style="position:absolute;left:171.2px;top:100.0px;width:17.9px;height:0.9px;background:repeating-linear-gradient(90deg,rgba(210,210,210,0.13) 0 1.5px,rgba(210,210,210,0.04) 1.5px 2.1px)"></i>
<i style="position:absolute;left:72.2px;top:60.8px;width:3.0px;height:0.9px;background:repeating-linear-gradient(90deg,rgba(210,210,210,0.14) 0 1.0px,rgba(210,210,210,0.05) 1.0px 1.3px)"></i>
<i style="position:absolute;left:34.9px;top:55.7px;width:5.0px;height:0.9px;background:repeating-linear-gradient(90deg,rgba(210,210,210,0.10) 0 1.5px,rgba(210,210,210,0.03) 1.5px 2.1px)"></i>
<i style="position:absolute;left:108.3px;top:1.1px;width:3.0px;height:0.9px;background:repeating-linear-gradient(90deg,rgba(210,210,210,0.10) 0 1.3px,rgba(210,210,210,0.04) 1.3px 1.7px)"></i>
<i style="position:absolute;left:19.0px;top:77.2px;width:8.0px;height:0.9px;background:repeating-linear-gradient(90deg,rgba(210,210,210,0.09) 0 1.5px,rgba(210,210,210,0.03) 1.5px 2.1px)"></i>
<i style="position:absolute;left:38.0px;top:19.5px;width:12.0px;height:0.9px;background:repeating-linear-gradient(90deg,rgba(210,210,210,0.11) 0 1.5px,rgba(210,210,210,0.04) 1.5px 2.2px)"></i>
<i style="position:absolute;left:63.0px;top:59.9px;width:8.0px;height:0.9px;background:repeating-linear-gradient(90deg,rgba(210,210,210,0.10) 0 0.9px,rgba(210,210,210,0.03) 0.9px 1.5px)"></i>
<i style="position:absolute;left:88.2px;top:60.7px;width:12.0px;height:0.9px;background:repeating-linear-gradient(90deg,rgba(210,210,210,0.13) 0 1.0px,rgba(210,210,210,0.04) 1.0px 1.5px)"></i>
<i style="position:absolute;left:26.6px;top:43.6px;width:25.0px;height:0.9px;background:repeating-linear-gradient(90deg,rgba(210,210,210,0.11) 0 1.4px,rgba(210,210,210,0.04) 1.4px 2.1px)"></i>
<i style="position:absolute;left:149.2px;top:65.1px;width:5.0px;height:0.9px;background:repeating-linear-gradient(90deg,rgba(210,210,210,0.11) 0 1.1px,rgba(210,210,210,0.04) 1.1px 1.6px)"></i>
<i style="position:absolute;left:171.2px;top:19.3px;width:8.0px;height:0.9px;background:repeating-linear-gradient(90deg,rgba(210,210,210,0.16) 0 1.2px,rgba(210,210,210,0.05) 1.2px 1.9px)"></i>
<i style="position:absolute;left:5.6px;top:38.1px;width:18.0px;height:0.9px;background:repeating-linear-gradient(90deg,rgba(210,210,210,0.17) 0 0.9px,rgba(210,210,210,0.05) 0.9px 1.6px)"></i>
<i style="position:absolute;left:17.1px;top:33.5px;width:35.0px;height:0.9px;background:repeating-linear-gradient(90deg,rgba(210,210,210,0.13) 0 0.9px,rgba(210,210,210,0.04) 0.9px 1.5px)"></i>
<i style="position:absolute;left:30.7px;top:28.7px;width:35.0px;height:0.9px;background:repeating-linear-gradient(90deg,rgba(210,210,210,0.16) 0 1.4px,rgba(210,210,210,0.05) 1.4px 2.1px)"></i>
<i style="position:absolute;left:90.8px;top:28.8px;width:25.0px;height:0.9px;background:repeating-linear-gradient(90deg,rgba(210,210,210,0.19) 0 1.2px,rgba(210,210,210,0.07) 1.2px 1.7px)"></i>
<i style="position:absolute;left:177.1px;top:25.3px;width:12.0px;height:0.9px;background:repeating-linear-gradient(90deg,rgba(210,210,210,0.11) 0 1.4px,rgba(210,210,210,0.04) 1.4px 2.0px)"></i>
<i style="position:absolute;left:72.5px;top:29.2px;width:35.0px;height:0.9px;background:repeating-linear-gradient(90deg,rgba(210,210,210,0.15) 0 1.2px,rgba(210,210,210,0.05) 1.2px 1.7px)"></i>
<i style="position:absolute;left:64.4px;top:123.8px;width:3.0px;height:0.9px;background:repeating-linear-gradient(90deg,rgba(210,210,210,0.19) 0 0.9px,rgba(210,210,210,0.06) 0.9px 1.6px)"></i>
<i style="position:absolute;left:85.3px;top:87.0px;width:5.0px;height:0.9px;background:repeating-linear-gradient(90deg,rgba(210,210,210,0.21) 0 1.1px,rgba(210,210,210,0.07) 1.1px 1.6px)"></i>
<i style="position:absolute;left:80.9px;top:123.6px;width:25.0px;height:0.9px;background:repeating-linear-gradient(90deg,rgba(210,210,210,0.21) 0 1.4px,rgba(210,210,210,0.07) 1.4px 1.9px)"></i>
<i style="position:absolute;left:66.1px;top:13.8px;width:5.0px;height:0.9px;background:repeating-linear-gradient(90deg,rgba(210,210,210,0.14) 0 0.8px,rgba(210,210,210,0.05) 0.8px 1.6px)"></i>
<i style="position:absolute;left:61.3px;top:78.5px;width:12.0px;height:0.9px;background:repeating-linear-gradient(90deg,rgba(210,210,210,0.20) 0 1.1px,rgba(210,210,210,0.07) 1.1px 1.9px)"></i>
<i style="position:absolute;left:151.2px;top:113.8px;width:12.0px;height:0.9px;background:repeating-linear-gradient(90deg,rgba(210,210,210,0.13) 0 1.0px,rgba(210,210,210,0.04) 1.0px 1.4px)"></i>
<i style="position:absolute;left:115.9px;top:83.0px;width:35.0px;height:0.9px;background:repeating-linear-gradient(90deg,rgba(210,210,210,0.20) 0 1.4px,rgba(210,210,210,0.07) 1.4px 2.0px)"></i>
<i style="position:absolute;left:140.8px;top:25.8px;width:35.0px;height:0.9px;background:repeating-linear-gradient(90deg,rgba(210,210,210,0.20) 0 1.3px,rgba(210,210,210,0.07) 1.3px 1.8px)"></i>
<i style="position:absolute;left:78.5px;top:42.3px;width:25.0px;height:0.9px;background:repeating-linear-gradient(90deg,rgba(210,210,210,0.19) 0 1.3px,rgba(210,210,210,0.07) 1.3px 2.0px)"></i>
<i style="position:absolute;left:174.7px;top:58.5px;width:12.0px;height:0.9px;background:repeating-linear-gradient(90deg,rgba(210,210,210,0.18) 0 1.4px,rgba(210,210,210,0.06) 1.4px 2.2px)"></i>
<i style="position:absolute;left:16.0px;top:22.2px;width:5.0px;height:0.9px;background:repeating-linear-gradient(90deg,rgba(210,210,210,0.10) 0 0.9px,rgba(210,210,210,0.03) 0.9px 1.7px)"></i>
<i style="position:absolute;left:27.9px;top:101.1px;width:12.0px;height:0.9px;background:repeating-linear-gradient(90deg,rgba(210,210,210,0.10) 0 1.1px,rgba(210,210,210,0.04) 1.1px 1.8px)"></i>
<i style="position:absolute;left:148.7px;top:82.6px;width:12.0px;height:0.9px;background:repeating-linear-gradient(90deg,rgba(210,210,210,0.13) 0 1.1px,rgba(210,210,210,0.04) 1.1px 1.6px)"></i>
<i style="position:absolute;left:99.0px;top:3.8px;width:5.0px;height:0.9px;background:repeating-linear-gradient(90deg,rgba(210,210,210,0.19) 0 1.5px,rgba(210,210,210,0.06) 1.5px 2.3px)"></i>
<i style="position:absolute;left:130.8px;top:66.4px;width:3.0px;height:0.9px;background:repeating-linear-gradient(90deg,rgba(210,210,210,0.21) 0 0.9px,rgba(210,210,210,0.07) 0.9px 1.5px)"></i>
<i style="position:absolute;left:78.5px;top:25.3px;width:35.0px;height:0.9px;background:repeating-linear-gradient(90deg,rgba(210,210,210,0.20) 0 1.4px,rgba(210,210,210,0.07) 1.4px 2.2px)"></i>
<i style="position:absolute;left:5.8px;top:37.4px;width:5.0px;height:0.9px;background:repeating-linear-gradient(90deg,rgba(210,210,210,0.11) 0 1.6px,rgba(210,210,210,0.04) 1.6px 2.2px)"></i>
<i style="position:absolute;left:105.8px;top:68.6px;width:8.0px;height:0.9px;background:repeating-linear-gradient(90deg,rgba(210,210,210,0.19) 0 0.9px,rgba(210,210,210,0.07) 0.9px 1.7px)"></i>
<i style="position:absolute;left:11.7px;top:45.0px;width:25.0px;height:0.9px;background:repeating-linear-gradient(90deg,rgba(210,210,210,0.14) 0 1.5px,rgba(210,210,210,0.05) 1.5px 2.2px)"></i>
<i style="position:absolute;left:105.2px;top:53.3px;width:18.0px;height:0.9px;background:repeating-linear-gradient(90deg,rgba(210,210,210,0.20) 0 1.2px,rgba(210,210,210,0.07) 1.2px 1.7px)"></i>
<i style="position:absolute;left:90.6px;top:19.9px;width:18.0px;height:0.9px;background:repeating-linear-gradient(90deg,rgba(210,210,210,0.15) 0 1.4px,rgba(210,210,210,0.05) 1.4px 1.9px)"></i>
<i style="position:absolute;left:157.0px;top:23.8px;width:32.1px;height:0.9px;background:repeating-linear-gradient(90deg,rgba(210,210,210,0.08) 0 0.9px,rgba(210,210,210,0.03) 0.9px 1.8px)"></i>
<i style="position:absolute;left:143.9px;top:18.7px;width:5.0px;height:0.9px;background:repeating-linear-gradient(90deg,rgba(210,210,210,0.16) 0 0.9px,rgba(210,210,210,0.05) 0.9px 1.7px)"></i>
<i style="position:absolute;left:22.3px;top:41.5px;width:3.0px;height:0.9px;background:repeating-linear-gradient(90deg,rgba(210,210,210,0.15) 0 1.4px,rgba(210,210,210,0.05) 1.4px 2.2px)"></i>
<i style="position:absolute;left:100.2px;top:97.4px;width:35.0px;height:0.9px;background:repeating-linear-gradient(90deg,rgba(210,210,210,0.20) 0 1.5px,rgba(210,210,210,0.07) 1.5px 1.9px)"></i>
<i style="position:absolute;left:11.0px;top:35.4px;width:5.0px;height:0.9px;background:repeating-linear-gradient(90deg,rgba(210,210,210,0.19) 0 1.4px,rgba(210,210,210,0.06) 1.4px 1.7px)"></i>
<i style="position:absolute;left:91.7px;top:4.6px;width:18.0px;height:0.9px;background:repeating-linear-gradient(90deg,rgba(210,210,210,0.20) 0 0.9px,rgba(210,210,210,0.07) 0.9px 1.5px)"></i>
<i style="position:absolute;left:12.1px;top:77.1px;width:8.0px;height:0.9px;background:repeating-linear-gradient(90deg,rgba(210,210,210,0.15) 0 0.8px,rgba(210,210,210,0.05) 0.8px 1.6px)"></i>
<i style="position:absolute;left:92.5px;top:35.5px;width:25.0px;height:0.9px;background:repeating-linear-gradient(90deg,rgba(210,210,210,0.15) 0 1.6px,rgba(210,210,210,0.05) 1.6px 2.2px)"></i>
<i style="position:absolute;left:145.3px;top:117.8px;width:18.0px;height:0.9px;background:repeating-linear-gradient(90deg,rgba(210,210,210,0.17) 0 1.2px,rgba(210,210,210,0.06) 1.2px 1.8px)"></i>
<i style="position:absolute;left:157.7px;top:115.5px;width:8.0px;height:0.9px;background:repeating-linear-gradient(90deg,rgba(210,210,210,0.20) 0 1.4px,rgba(210,210,210,0.07) 1.4px 1.8px)"></i>
<i style="position:absolute;left:37.1px;top:18.1px;width:12.0px;height:0.9px;background:repeating-linear-gradient(90deg,rgba(210,210,210,0.10) 0 1.0px,rgba(210,210,210,0.03) 1.0px 1.9px)"></i>
<i style="position:absolute;left:79.9px;top:84.3px;width:3.0px;height:0.9px;background:repeating-linear-gradient(90deg,rgba(210,210,210,0.14) 0 1.0px,rgba(210,210,210,0.05) 1.0px 1.4px)"></i>
<i style="position:absolute;left:38.9px;top:98.3px;width:8.0px;height:0.9px;background:repeating-linear-gradient(90deg,rgba(210,210,210,0.20) 0 1.4px,rgba(210,210,210,0.07) 1.4px 1.7px)"></i>
<i style="position:absolute;left:28.4px;top:80.9px;width:25.0px;height:0.9px;background:repeating-linear-gradient(90deg,rgba(210,210,210,0.13) 0 1.2px,rgba(210,210,210,0.04) 1.2px 2.1px)"></i>
<i style="position:absolute;left:46.1px;top:121.1px;width:5.0px;height:0.9px;background:repeating-linear-gradient(90deg,rgba(210,210,210,0.11) 0 1.0px,rgba(210,210,210,0.04) 1.0px 1.5px)"></i>
<i style="position:absolute;left:171.3px;top:110.8px;width:12.0px;height:0.9px;background:repeating-linear-gradient(90deg,rgba(210,210,210,0.10) 0 1.5px,rgba(210,210,210,0.04) 1.5px 1.9px)"></i>
<i style="position:absolute;left:120.3px;top:21.1px;width:5.0px;height:0.9px;background:repeating-linear-gradient(90deg,rgba(210,210,210,0.14) 0 1.2px,rgba(210,210,210,0.05) 1.2px 1.8px)"></i>
<i style="position:absolute;left:93.1px;top:53.3px;width:8.0px;height:0.9px;background:repeating-linear-gradient(90deg,rgba(210,210,210,0.13) 0 0.8px,rgba(210,210,210,0.04) 0.8px 1.4px)"></i>
<i style="position:absolute;left:17.3px;top:3.5px;width:8.0px;height:0.9px;background:repeating-linear-gradient(90deg,rgba(210,210,210,0.16) 0 1.3px,rgba(210,210,210,0.05) 1.3px 1.7px)"></i>
<i style="position:absolute;left:79.6px;top:48.8px;width:3.0px;height:0.9px;background:repeating-linear-gradient(90deg,rgba(210,210,210,0.15) 0 1.0px,rgba(210,210,210,0.05) 1.0px 1.8px)"></i>
<i style="position:absolute;left:53.7px;top:15.1px;width:3.0px;height:0.9px;background:repeating-linear-gradient(90deg,rgba(210,210,210,0.20) 0 1.3px,rgba(210,210,210,0.07) 1.3px 1.7px)"></i>
<i style="position:absolute;left:41.7px;top:11.5px;width:3.0px;height:0.9px;background:repeating-linear-gradient(90deg,rgba(210,210,210,0.12) 0 1.0px,rgba(210,210,210,0.04) 1.0px 1.5px)"></i>
<i style="position:absolute;left:163.0px;top:34.6px;width:5.0px;height:0.9px;background:repeating-linear-gradient(90deg,rgba(210,210,210,0.10) 0 1.1px,rgba(210,210,210,0.03) 1.1px 1.7px)"></i>
<i style="position:absolute;left:76.4px;top:102.7px;width:25.0px;height:0.9px;background:repeating-linear-gradient(90deg,rgba(210,210,210,0.11) 0 1.4px,rgba(210,210,210,0.04) 1.4px 2.1px)"></i>
<i style="position:absolute;left:27.5px;top:71.9px;width:18.0px;height:0.9px;background:repeating-linear-gradient(90deg,rgba(210,210,210,0.17) 0 1.1px,rgba(210,210,210,0.06) 1.1px 1.6px)"></i>
<i style="position:absolute;left:16.8px;top:100.2px;width:3.0px;height:0.9px;background:repeating-linear-gradient(90deg,rgba(210,210,210,0.11) 0 0.8px,rgba(210,210,210,0.04) 0.8px 1.3px)"></i>
<i style="position:absolute;left:161.1px;top:117.5px;width:8.0px;height:0.9px;background:repeating-linear-gradient(90deg,rgba(210,210,210,0.17) 0 1.5px,rgba(210,210,210,0.05) 1.5px 1.8px)"></i>
<i style="position:absolute;left:144.3px;top:76.5px;width:3.0px;height:0.9px;background:repeating-linear-gradient(90deg,rgba(210,210,210,0.11) 0 1.2px,rgba(210,210,210,0.04) 1.2px 1.6px)"></i>
<i style="position:absolute;left:48.1px;top:57.4px;width:3.0px;height:0.9px;background:repeating-linear-gradient(90deg,rgba(210,210,210,0.13) 0 1.4px,rgba(210,210,210,0.04) 1.4px 1.8px)"></i>
<i style="position:absolute;left:99.8px;top:78.2px;width:8.0px;height:0.9px;background:repeating-linear-gradient(90deg,rgba(210,210,210,0.08) 0 1.2px,rgba(210,210,210,0.03) 1.2px 1.6px)"></i>
<i style="position:absolute;left:127.8px;top:121.3px;width:3.0px;height:0.9px;background:repeating-linear-gradient(90deg,rgba(210,210,210,0.11) 0 1.5px,rgba(210,210,210,0.04) 1.5px 1.9px)"></i>
<i style="position:absolute;left:33.2px;top:79.1px;width:8.0px;height:0.9px;background:repeating-linear-gradient(90deg,rgba(210,210,210,0.15) 0 1.3px,rgba(210,210,210,0.05) 1.3px 2.0px)"></i>
<i style="position:absolute;left:37.7px;top:63.1px;width:12.0px;height:0.9px;background:repeating-linear-gradient(90deg,rgba(210,210,210,0.11) 0 1.5px,rgba(210,210,210,0.04) 1.5px 2.1px)"></i>
<i style="position:absolute;left:62.9px;top:124.4px;width:3.0px;height:0.9px;background:repeating-linear-gradient(90deg,rgba(210,210,210,0.08) 0 1.5px,rgba(210,210,210,0.03) 1.5px 1.9px)"></i>
<i style="position:absolute;left:4.1px;top:69.4px;width:18.0px;height:0.9px;background:repeating-linear-gradient(90deg,rgba(210,210,210,0.11) 0 1.3px,rgba(210,210,210,0.04) 1.3px 2.1px)"></i>
<i style="position:absolute;left:85.8px;top:14.3px;width:12.0px;height:0.9px;background:repeating-linear-gradient(90deg,rgba(210,210,210,0.19) 0 0.8px,rgba(210,210,210,0.07) 0.8px 1.2px)"></i>
<i style="position:absolute;left:78.2px;top:68.8px;width:12.0px;height:0.9px;background:repeating-linear-gradient(90deg,rgba(210,210,210,0.20) 0 1.3px,rgba(210,210,210,0.07) 1.3px 1.8px)"></i>
<i style="position:absolute;left:174.5px;top:86.4px;width:8.0px;height:0.9px;background:repeating-linear-gradient(90deg,rgba(210,210,210,0.22) 0 1.4px,rgba(210,210,210,0.07) 1.4px 1.8px)"></i>
<i style="position:absolute;left:62.1px;top:110.5px;width:35.0px;height:0.9px;background:repeating-linear-gradient(90deg,rgba(210,210,210,0.18) 0 1.2px,rgba(210,210,210,0.06) 1.2px 1.9px)"></i>
</div>

<!-- scrollbar -->
<div class="scroll"></div>
<div class="r" style="left:762px;top:40.5px;border-left:2.2px solid transparent;border-right:2.2px solid transparent;border-bottom:3px solid #bbb"></div>
<div class="r" style="left:762.3px;top:46px;width:4px;height:325px;background:#9e9e9e;border-radius:2px"></div>
<div class="r" style="left:762px;top:466.5px;border-left:2.2px solid transparent;border-right:2.2px solid transparent;border-top:3px solid #bbb"></div>
<!-- left window border -->
<div class="r" style="left:0;top:0;width:1px;height:38.5px;background:#3a3a3a"></div>
<div class="r" style="left:0;top:470.8px;width:768px;height:1.2px;background:#9a9a9a"></div>
<div class="r" style="left:0;top:38.5px;width:1px;height:434px;background:#a5a5a5"></div>
</div></body></html>
